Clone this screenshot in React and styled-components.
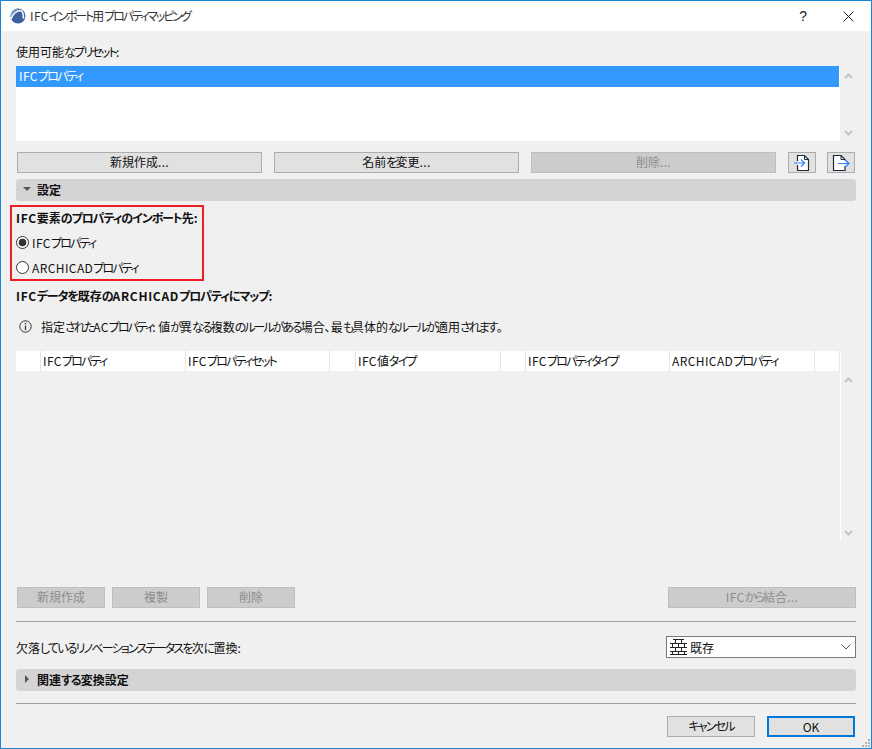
import styled, { createGlobalStyle } from 'styled-components';

const GlobalStyle = createGlobalStyle`
  html, body {
    margin: 0;
    padding: 0;
    background: #f0f0f0;
  }
  * {
    box-sizing: border-box;
  }
`;

const columns = [
  { label: '', width: 25 },
  { label: 'IFCプロパティ', width: 145 },
  { label: 'IFCプロパティセット', width: 144 },
  { label: '', width: 26 },
  { label: 'IFC値タイプ', width: 145 },
  { label: '', width: 25 },
  { label: 'IFCプロパティタイプ', width: 144 },
  { label: 'ARCHICADプロパティ', width: 145 },
  { label: '', width: 25 },
];

// the screenshot's UI font sets kana narrow and latin wide, kanji stay full width
function Jp({ children }) {
  return children.split(/([\u3040-\u30ff]+|[A-Za-z.]+)/).map((part, i) => {
    if (i % 2 === 0) return part;
    return /^[A-Za-z.]/.test(part) ? <Latin key={i}>{part}</Latin> : <Kana key={i}>{part}</Kana>;
  });
}

function AppLogo() {
  return (
    <svg width="16" height="16" viewBox="0 0 16 16">
      <circle cx="8" cy="8" r="7.5" fill="#3f5f9f" />
      <path d="M1 11C3 6 6 3 10 2.5c2 0 3.5 3 3.5 8" fill="none" stroke="#fff" strokeWidth="1.6" />
      <path d="M1 8C2 4 5 1 8 1" fill="none" stroke="#8fb0e0" strokeWidth="1.2" />
    </svg>
  );
}

function ImportIcon() {
  return (
    <svg width="18" height="18" viewBox="0 0 18 18">
      <path d="M4.5 7V1.500h7l4 4v11h-11V11" fill="#fff" stroke="#1f2a38" strokeWidth="1.2" />
      <path d="M11.500 1.500v4h4" fill="none" stroke="#1f2a38" strokeWidth="1" />
      <path d="M1 9h10.500M8 5.500L11.500 9 8 12.500" fill="none" stroke="#2f80ff" strokeWidth="1.2" />
    </svg>
  );
}

function ExportIcon() {
  return (
    <svg width="18" height="18" viewBox="0 0 18 18">
      <path d="M13 6.500v-1l-4-4H1.500v15H13V12" fill="#fff" stroke="#1f2a38" strokeWidth="1.2" />
      <path d="M9 1.500v4h4" fill="none" stroke="#1f2a38" strokeWidth="1" />
      <path d="M6 9.500h11M13.500 6l3.500 3.500-3.500 3.500" fill="none" stroke="#2f80ff" strokeWidth="1.2" />
    </svg>
  );
}

function InfoIcon() {
  return (
    <svg width="13" height="13" viewBox="0 0 13 13">
      <circle cx="6.500" cy="6.500" r="5.700" fill="none" stroke="#333" strokeWidth="1" />
      <path d="M6.500 5.500v4.500" stroke="#333" strokeWidth="1.300" />
      <rect x="5.800" y="2.900" width="1.400" height="1.400" fill="#333" />
    </svg>
  );
}

function BrickIcon() {
  return (
    <svg width="17" height="16" viewBox="0 0 17 16">
      <path
        d="M3 0.500h11M0 4.500h17M0 8.500h17M0 12.500h17M0 15.500h17M5.500 0.500v4M11.500 0.500v4M2.500 4.500v4M8.500 4.500v4M14.500 4.500v4M5.500 8.500v4M11.500 8.500v4M2.500 12.500v3M8.500 12.500v3M14.500 12.500v3"
        fill="none"
        stroke="#222"
        strokeWidth="1"
      />
    </svg>
  );
}

function Chevron({ up }) {
  return (
    <svg width="9" height="6" viewBox="0 0 9 6">
      <path d={up ? 'M1 5l3.500-3.500L8 5' : 'M1 1l3.500 3.500L8 1'} fill="none" stroke="#c4c4c4" strokeWidth="2" />
    </svg>
  );
}

export default function App() {
  return (
    <>
      <GlobalStyle />
      <Window>
        <TitleBar>
          <TitleLeft>
            <AppLogo />
            <TitleText><Jp>IFCインポート用プロパティマッピング</Jp></TitleText>
          </TitleLeft>
          <TitleHelp>?</TitleHelp>
          <CloseIcon width="11" height="11" viewBox="0 0 11 11">
            <path d="M0.500 0.500l10 10M10.500 0.500l-10 10" stroke="#222" strokeWidth="1" fill="none" />
          </CloseIcon>
        </TitleBar>
        <Body>
          <PresetLabel><Jp>使用可能なプリセット:</Jp></PresetLabel>
          <ListRow>
            <PresetList>
              <SelectedRow><Jp>IFCプロパティ</Jp></SelectedRow>
            </PresetList>
            <ScrollTrack>
              <Chevron up />
              <Chevron />
            </ScrollTrack>
          </ListRow>
          <PresetButtons>
            <Button $width={245}><Jp>新規作成...</Jp></Button>
            <Button $width={245}><Jp>名前を変更...</Jp></Button>
            <Button $width={245} disabled><Jp>削除...</Jp></Button>
            <IconButton><ImportIcon /></IconButton>
            <IconButton><ExportIcon /></IconButton>
          </PresetButtons>
          <SectionBar>
            <ArrowDown />
            設定
          </SectionBar>
          <ImportBox>
            <BoldLabel><Jp>IFC要素のプロパティのインポート先:</Jp></BoldLabel>
            <RadioRow>
              <Radio $checked />
              <span><Jp>IFCプロパティ</Jp></span>
            </RadioRow>
            <RadioRow>
              <Radio />
              <span><Jp>ARCHICADプロパティ</Jp></span>
            </RadioRow>
          </ImportBox>
          <MapLabel><Jp>IFCデータを既存のARCHICADプロパティにマップ:</Jp></MapLabel>
          <InfoRow>
            <InfoIcon />
            <span><Jp>指定されたACプロパティ: 値が異なる複数のルールがある場合、最も具体的なルールが適用されます。</Jp></span>
          </InfoRow>
          <TableRow>
            <TableArea>
              <HeaderRow>
                {columns.map((col, i) => (
                  <HeaderCell key={i} style={{ width: col.width }}><Jp>{col.label}</Jp></HeaderCell>
                ))}
              </HeaderRow>
            </TableArea>
            <TableScroll>
              <Chevron up />
              <Chevron />
            </TableScroll>
          </TableRow>
          <TableButtons>
            <Button $width={88} disabled>新規作成</Button>
            <Button $width={88} disabled>複製</Button>
            <Button $width={88} disabled>削除</Button>
            <Spacer />
            <Button $width={188} disabled><Jp>IFCから結合...</Jp></Button>
          </TableButtons>
          <Divider $top={13} />
          <ReplaceRow>
            <span><Jp>欠落しているリノベーションステータスを次に置換:</Jp></span>
            <Select>
              <BrickIcon />
              <SelectText>既存</SelectText>
              <svg width="10" height="6" viewBox="0 0 10 6">
                <path d="M0.500 0.500L5 5l4.500-4.500" fill="none" stroke="#555" strokeWidth="1" />
              </svg>
            </Select>
          </ReplaceRow>
          <SectionBar $top={11}>
            <ArrowRight />
            <span><Jp>関連する変換設定</Jp></span>
          </SectionBar>
          <Divider $top={12} />
          <Footer>
            <Button $width={88}><Jp>キャンセル</Jp></Button>
            <Button $width={88} $primary>OK</Button>
          </Footer>
        </Body>
        <Grip width="10" height="10" viewBox="0 0 10 10">
          <path d="M7 1h2v2H7zM4 4h2v2H4zM7 4h2v2H7zM1 7h2v2H1zM4 7h2v2H4zM7 7h2v2H7z" fill="#b4b4b4" />
        </Grip>
      </Window>
    </>
  );
}

const Window = styled.div`
  --kana: -1.8px;
  --latin: 0.4px;
  position: relative;
  width: 872px;
  height: 749px;
  display: flex;
  flex-direction: column;
  background: #f0f0f0;
  border: 1px solid #1a86d8;
  overflow: hidden;
  font-family: "Noto Sans CJK JP", "Noto Sans", sans-serif;
  font-size: 12px;
  font-feature-settings: "palt";
  color: #111;
`;

const Kana = styled.span`
  letter-spacing: var(--kana);
`;

const Latin = styled.span`
  letter-spacing: var(--latin);
`;

const TitleBar = styled.div`
  height: 30px;
  flex: none;
  display: flex;
  align-items: center;
  background: #fff;
  padding: 0 17px 0 9px;
`;

const TitleLeft = styled.div`
  flex: 1;
  display: flex;
  align-items: center;
  gap: 4px;
`;

const TitleText = styled.span`
  --kana: -2.1px;
  color: #333;
  line-height: 16px;
`;

const TitleHelp = styled.span`
  font-family: "Liberation Sans", sans-serif;
  font-size: 14px;
  color: #222;
  margin-right: 36px;
`;

const CloseIcon = styled.svg`
  display: block;
`;

const Body = styled.div`
  flex: 1;
  display: flex;
  flex-direction: column;
  padding: 0 15px;
`;

const PresetLabel = styled.div`
  height: 17px;
  margin-top: 13px;
  line-height: 15px;
`;

const ListRow = styled.div`
  margin-top: 5px;
  display: flex;
`;

const PresetList = styled.div`
  width: 824px;
  height: 75px;
  background: #fff;
`;

const SelectedRow = styled.div`
  height: 21px;
  margin-right: 1px;
  padding-left: 3px;
  line-height: 19px;
  background: #3399ff;
  color: #fff;
`;

const ScrollTrack = styled.div`
  width: 16px;
  height: 75px;
  display: flex;
  flex-direction: column;
  align-items: center;
  justify-content: space-between;
  padding: 7px 0 5px;
`;

const PresetButtons = styled.div`
  margin-top: 11px;
  padding-left: 1px;
  display: flex;
  gap: 12px;
`;

const Button = styled.button`
  width: ${(p) => p.$width}px;
  height: 21px;
  flex: none;
  padding: 0 0 2px;
  font: inherit;
  line-height: 17px;
  color: ${(p) => (p.disabled ? '#8c8c8c' : '#111')};
  background: ${(p) => (p.disabled ? '#cccccc' : '#e1e1e1')};
  border: ${(p) => (p.$primary ? '2px solid #0078d7' : p.disabled ? '1px solid #bfbfbf' : '1px solid #adadad')};
`;

const IconButton = styled.button`
  width: 28px;
  height: 21px;
  flex: none;
  padding: 0;
  display: flex;
  align-items: center;
  justify-content: center;
  background: #e1e1e1;
  border: 1px solid #adadad;
  & + & {
    margin-left: -1px;
  }
`;

const SectionBar = styled.div`
  margin-top: ${(p) => p.$top ?? 6}px;
  height: 22px;
  display: flex;
  align-items: center;
  gap: 6px;
  padding: 0 0 2px 7px;
  background: #d4d4d4;
  border-radius: 3px;
  font-weight: 700;
  color: #111;
  --kana: -1.1px;
`;

const ArrowDown = styled.span`
  width: 0;
  height: 0;
  border-left: 4px solid transparent;
  border-right: 4px solid transparent;
  border-top: 4px solid #555;
`;

const ArrowRight = styled.span`
  margin-left: 2px;
  margin-right: 2px;
  width: 0;
  height: 0;
  border-top: 4px solid transparent;
  border-bottom: 4px solid transparent;
  border-left: 4px solid #555;
`;

const ImportBox = styled.div`
  margin: 4px 0 0 -6px;
  width: 194px;
  height: 76px;
  padding: 3px 0 0 4px;
  border: 2px solid #ee1c25;
`;

const BoldLabel = styled.div`
  --kana: -1.1px;
  --latin: 0.7px;
  font-weight: 700;
  line-height: 16px;
  height: 16px;
  white-space: nowrap;
`;

const RadioRow = styled.div`
  margin-top: 8px;
  height: 17px;
  display: flex;
  align-items: center;
  gap: 3px;
  line-height: 15px;
`;

const Radio = styled.span`
  width: 13px;
  height: 13px;
  flex: none;
  border-radius: 50%;
  border: 1px solid #333;
  background: ${(p) => (p.$checked ? 'radial-gradient(circle, #333 0 3.500px, #fff 4.200px)' : '#fff')};
`;

const MapLabel = styled.div`
  --kana: -1.1px;
  --latin: 0.7px;
  margin-top: 7px;
  height: 17px;
  line-height: 16px;
  font-weight: 700;
`;

const InfoRow = styled.div`
  --kana: -2px;
  margin-top: 13px;
  height: 17px;
  padding-left: 3px;
  display: flex;
  align-items: center;
  gap: 9px;
`;

const TableRow = styled.div`
  margin-top: 16px;
  display: flex;
`;

const TableArea = styled.div`
  width: 824px;
  height: 190px;
`;

const HeaderRow = styled.div`
  display: flex;
  height: 20px;
  background: #fff;
`;

const HeaderCell = styled.div`
  flex: none;
  padding-left: 2px;
  line-height: 19px;
  white-space: nowrap;
  overflow: hidden;
  border-right: 1px solid #e4e4e4;
`;

const TableScroll = styled.div`
  width: 16px;
  height: 190px;
  display: flex;
  flex-direction: column;
  align-items: center;
  justify-content: space-between;
  padding: 26px 0 5px;
  border-left: 1px solid #fff;
`;

const TableButtons = styled.div`
  margin-top: 46px;
  padding-left: 1px;
  display: flex;
  gap: 7px;
`;

const Spacer = styled.div`
  flex: 1;
`;

const Divider = styled.div`
  margin-top: ${(p) => p.$top}px;
  height: 1px;
  flex: none;
  background: #a0a0a0;
`;

const ReplaceRow = styled.div`
  margin-top: 14px;
  height: 22px;
  display: flex;
  align-items: center;
  justify-content: space-between;
`;

const Select = styled.div`
  width: 190px;
  height: 22px;
  display: flex;
  align-items: center;
  padding: 0 4px 0 3px;
  background: #fff;
  border: 1px solid #7a7a7a;
`;

const SelectText = styled.span`
  flex: 1;
  margin-left: 3px;
`;

const Footer = styled.div`
  margin-top: 12px;
  display: flex;
  justify-content: flex-end;
  gap: 12px;
  padding-right: 1px;
`;

const Grip = styled.svg`
  position: absolute;
  right: 0;
  bottom: 0;
`;
